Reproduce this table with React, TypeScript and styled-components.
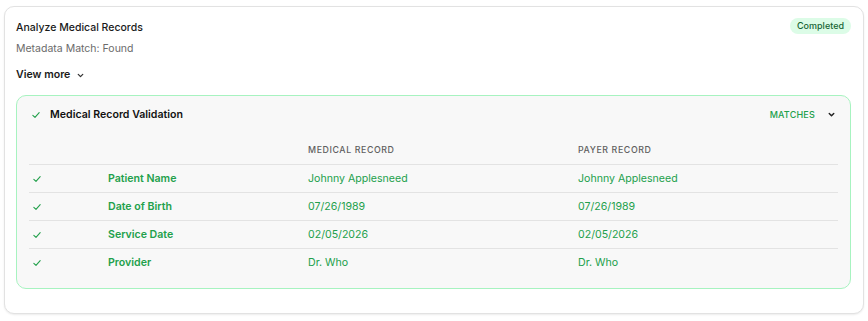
import React from 'react';
import styled, { createGlobalStyle } from 'styled-components';

const GlobalStyle = createGlobalStyle`
  body {
    margin: 0;
    background: #ffffff;
    font-family: Inter, "Noto Sans", sans-serif;
    -webkit-font-smoothing: antialiased;
  }
  * { box-sizing: border-box; }
`

const Page = styled.div`
  padding: 6px 4px 7px 4px;
`

const Card = styled.div`
  border: 1px solid #e2e2e2;
  border-radius: 10px;
  box-shadow: 0 1px 2px rgba(0, 0, 0, 0.08);
  padding: 12px 12px 24px 11px;
  background: #fff;
`

const CardHead = styled.div`
  display: flex;
  justify-content: space-between;
  align-items: flex-start;
`

const Title = styled.div`
  font-size: 10.5px;
  font-weight: 500;
  color: #1a1a1a;
  line-height: 18px;
`

const Caption = styled.div`
  font-size: 10.5px;
  color: #6b6b6b;
  line-height: 18px;
  margin-top: 3px;
`

const Badge = styled.span`
  margin-top: -1px;
  background: #dcfce7;
  color: #166534;
  font-size: 9px;
  font-weight: 500;
  line-height: 16px;
  padding: 0 7px;
  border-radius: 999px;
`

const ViewMore = styled.button`
  display: flex;
  align-items: center;
  gap: 6px;
  border: 0;
  background: none;
  padding: 0;
  margin-top: 8px;
  font-family: inherit;
  font-size: 10.6px;
  font-weight: 600;
  color: #1a1a1a;
  line-height: 18px;
  cursor: pointer;
`

const Panel = styled.div`
  margin-top: 11px;
  border: 1px solid #a7f3c0;
  border-radius: 10px;
  background: #f8f8f8;
  padding: 0 12px 11px 12px;
`

const PanelHead = styled.div`
  display: flex;
  align-items: center;
  height: 37px;
  padding: 0 0 0 2px;
`

const PanelTitle = styled.div`
  flex: 1;
  margin-left: 9px;
  font-size: 10.6px;
  font-weight: 600;
  color: #111;
`

const Status = styled.div`
  display: flex;
  align-items: center;
  gap: 12px;
  margin-right: 2px;
  font-size: 9px;
  font-weight: 500;
  letter-spacing: 0.2px;
  color: #22a04b;
`

const Row = styled.div<{ $head?: boolean; $last?: boolean }>`
  display: grid;
  grid-template-columns: 79px 200px 270px 1fr;
  align-items: center;
  height: ${p => (p.$head ? '32px' : '28px')};
  padding-top: ${p => (p.$head ? '2px' : '0')};
  border-bottom: 1px solid ${p => (p.$last ? 'transparent' : '#e3e3e3')};
`

const HeadCell = styled.div`
  font-size: 8.8px;
  font-weight: 500;
  letter-spacing: 0.6px;
  color: #5f5f5f;
  text-transform: uppercase;
`

const Cell = styled.div<{ $strong?: boolean }>`
  font-size: 10.6px;
  font-weight: ${p => (p.$strong ? 600 : 400)};
  color: #22a04b;
`

const CheckCell = styled.div`
  padding-left: 3px;
  display: flex;
  align-items: center;
`

const Check = ({ size = 10 }: { size?: number }) => (
  <svg width={size} height={size} viewBox="0 0 12 12" fill="none">
    <path d="M2.2 6.4 L4.8 8.9 L9.8 3.2" stroke="#22a04b" strokeWidth="1.3" strokeLinecap="round" strokeLinejoin="round" />
  </svg>
)

const Chevron = ({ color, width = 1.4 }: { color: string; width?: number }) => (
  <svg width="9" height="9" viewBox="0 0 10 10" fill="none">
    <path d="M2.5 3.8 L5 6.3 L7.5 3.8" stroke={color} strokeWidth={width} strokeLinecap="round" strokeLinejoin="round" />
  </svg>
)

const rows = [
  { label: 'Patient Name', medical: 'Johnny Applesneed', payer: 'Johnny Applesneed' },
  { label: 'Date of Birth', medical: '07/26/1989', payer: '07/26/1989' },
  { label: 'Service Date', medical: '02/05/2026', payer: '02/05/2026' },
  { label: 'Provider', medical: 'Dr. Who', payer: 'Dr. Who' },
]

export default function App() {
  return (
    <Page>
      <GlobalStyle />
      <Card>
        <CardHead>
          <div>
            <Title>Analyze Medical Records</Title>
            <Caption>Metadata Match: Found</Caption>
          </div>
          <Badge>Completed</Badge>
        </CardHead>
        <ViewMore>
          View more <Chevron color="#333" />
        </ViewMore>
        <Panel>
          <PanelHead>
            <Check />
            <PanelTitle>Medical Record Validation</PanelTitle>
            <Status>
              MATCHES <Chevron color="#222" width={1.6} />
            </Status>
          </PanelHead>
          <div>
            <Row $head>
              <div />
              <div />
              <HeadCell>Medical Record</HeadCell>
              <HeadCell>Payer Record</HeadCell>
            </Row>
            {rows.map((r, i) => (
              <Row key={r.label} $last={i === rows.length - 1}>
                <CheckCell>
                  <Check />
                </CheckCell>
                <Cell $strong>{r.label}</Cell>
                <Cell>{r.medical}</Cell>
                <Cell>{r.payer}</Cell>
              </Row>
            ))}
          </div>
        </Panel>
      </Card>
    </Page>
  )
}
